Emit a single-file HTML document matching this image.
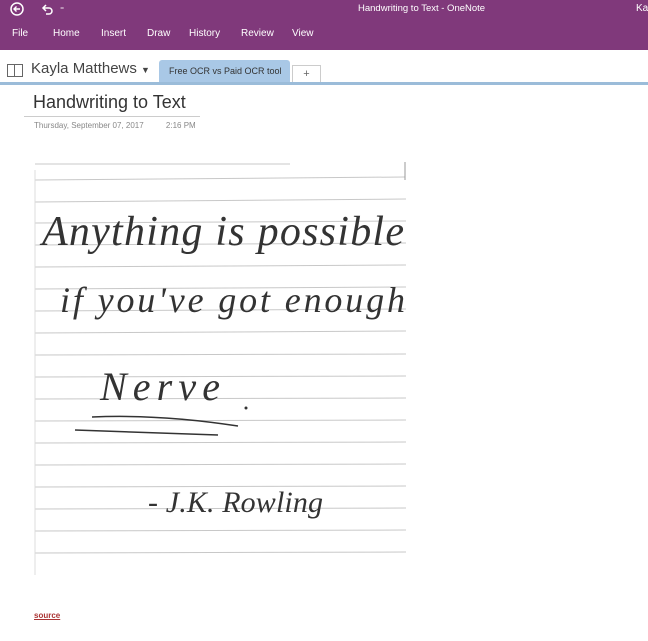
<!DOCTYPE html>
<html><head><style>
body{margin:0;width:648px;height:641px;overflow:hidden;background:#fff;font-family:"Liberation Sans",sans-serif;position:relative}
.top{position:absolute;left:0;top:0;width:648px;height:50px;background:#80397b}
.t{position:absolute;color:#fff;font-size:10px}
.hw{font-family:"Liberation Serif",serif;font-style:italic;fill:#333;}
</style></head><body>
<div class="top"></div>
<svg style="position:absolute;left:10px;top:2px" width="60" height="14"><circle cx="7" cy="7" r="6" fill="none" stroke="#fff" stroke-width="1.5"/><path d="M10 7H4M6.5 4.5L4 7l2.5 2.5" stroke="#fff" fill="none" stroke-width="1.4"/><path d="M34 6h5a3 3 0 010 6h-3M36 3l-3 3 3 3" stroke="#fff" fill="none" stroke-width="1.5"/><text x="50" y="10" fill="#fff" font-size="8">⁼</text></svg>
<div class="t" style="left:358px;top:3px;font-size:9.5px">Handwriting to Text - OneNote</div>
<div class="t" style="left:636px;top:3px">Ka</div>
<div class="t" style="left:12px;top:28px">File</div>
<div class="t" style="left:53px;top:28px">Home</div>
<div class="t" style="left:101px;top:28px">Insert</div>
<div class="t" style="left:147px;top:28px">Draw</div>
<div class="t" style="left:189px;top:28px">History</div>
<div class="t" style="left:241px;top:28px">Review</div>
<div class="t" style="left:292px;top:28px">View</div>
<div style="position:absolute;left:7px;top:64px;width:14px;height:11px;border:1px solid #666"></div>
<div style="position:absolute;left:14px;top:64px;width:1px;height:12px;background:#666"></div>
<div style="position:absolute;left:31px;top:60px;font-size:15px;color:#444">Kayla Matthews <span style="font-size:9px">▼</span></div>
<div style="position:absolute;left:159px;top:60px;width:131px;height:22px;background:#a9c8e6;border-radius:3px 3px 0 0;font-size:9px;color:#333;line-height:22px;text-indent:10px">Free OCR vs Paid OCR tool</div>
<div style="position:absolute;left:292px;top:65px;width:27px;height:16px;border:1px solid #ccc;border-bottom:none;font-size:11px;color:#666;text-align:center;line-height:16px">+</div>
<div style="position:absolute;left:0;top:82px;width:648px;height:3px;background:#9bbcd9"></div>
<div style="position:absolute;left:33px;top:92px;font-size:18px;color:#333">Handwriting to Text</div>
<div style="position:absolute;left:24px;top:116px;width:176px;height:1px;background:#ccc"></div>
<div style="position:absolute;left:34px;top:121px;font-size:8px;color:#888">Thursday, September 07, 2017&nbsp;&nbsp;&nbsp;&nbsp;&nbsp;&nbsp;&nbsp;&nbsp;&nbsp;&nbsp;2:16 PM</div>
<svg style="position:absolute;left:0;top:150px" width="420" height="440">
<g stroke="#c8c8c8" stroke-width="1">
<line x1="35" y1="14" x2="290" y2="14"/>
<line x1="35" y1="30" x2="405" y2="27"/>
<line x1="35" y1="52" x2="406" y2="49"/>
<line x1="35" y1="73" x2="406" y2="71"/>
<line x1="35" y1="95" x2="406" y2="93"/>
<line x1="35" y1="117" x2="406" y2="115"/>
<line x1="35" y1="139" x2="406" y2="137"/>
<line x1="35" y1="161" x2="406" y2="159"/>
<line x1="35" y1="183" x2="406" y2="181"/>
<line x1="35" y1="205" x2="406" y2="204"/>
<line x1="35" y1="227" x2="406" y2="226"/>
<line x1="35" y1="249" x2="406" y2="248"/>
<line x1="35" y1="271" x2="406" y2="270"/>
<line x1="35" y1="293" x2="406" y2="292"/>
<line x1="35" y1="315" x2="406" y2="314"/>
<line x1="35" y1="337" x2="406" y2="336"/>
<line x1="35" y1="359" x2="406" y2="358"/>
<line x1="35" y1="381" x2="406" y2="380"/>
<line x1="35" y1="403" x2="406" y2="402"/>
<line x1="35" y1="20" x2="35" y2="425" stroke="#ddd"/>
<line x1="405" y1="12" x2="405" y2="30" stroke="#999"/>
</g>
<text class="hw" x="42" y="95" font-size="42" textLength="362">Anything is possible</text>
<text class="hw" x="60" y="162" font-size="36" textLength="345">if you've got enough</text>
<text class="hw" x="100" y="250" font-size="40" textLength="120">Nerve</text>
<circle cx="246" cy="258" r="1.5" fill="#333"/>
<path d="M92 267Q160 264 238 276" stroke="#333" stroke-width="1.5" fill="none"/>
<path d="M75 280Q140 282 218 285" stroke="#333" stroke-width="1.5" fill="none"/>
<text class="hw" x="148" y="362" font-size="30" textLength="175">- J.K. Rowling</text>
</svg>
<div style="position:absolute;left:34px;top:611px;font-size:8px;color:#a33;text-decoration:underline;font-weight:bold">source</div>
</body></html>
